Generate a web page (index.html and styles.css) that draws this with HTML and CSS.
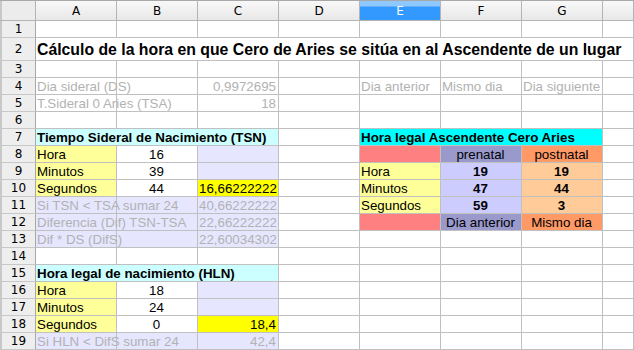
FILE: index.html
```html
<!DOCTYPE html>
<html>
<head>
<meta charset="utf-8">
<link rel="stylesheet" href="styles.css">
</head>
<body>
<table class="sheet">
<colgroup>
<col class="c-rh"><col class="c"><col class="c"><col class="c"><col class="c"><col class="c"><col class="c"><col class="c"><col class="c-last">
</colgroup>
<tr class="hdr">
<th class="corner"></th><th>A</th><th>B</th><th>C</th><th>D</th><th class="sel">E</th><th>F</th><th>G</th><th></th>
</tr>
<tr><th class="rh">1</th><td></td><td></td><td></td><td></td><td></td><td></td><td></td><td></td></tr>
<tr class="tall"><th class="rh">2</th><td colspan="8" class="title">Cálculo de la hora en que Cero de Aries se sitúa en al Ascendente de un lugar</td></tr>
<tr><th class="rh">3</th><td></td><td></td><td></td><td></td><td></td><td></td><td></td><td></td></tr>
<tr><th class="rh">4</th><td class="grey">Dia sideral (DS)</td><td></td><td class="grey r">0,9972695</td><td></td><td class="grey">Dia anterior</td><td class="grey">Mismo dia</td><td class="grey">Dia siguiente</td><td></td></tr>
<tr><th class="rh">5</th><td class="grey">T.Sideral 0 Aries (TSA)</td><td></td><td class="grey r">18</td><td></td><td></td><td></td><td></td><td></td></tr>
<tr><th class="rh">6</th><td></td><td></td><td></td><td></td><td></td><td></td><td></td><td></td></tr>
<tr><th class="rh">7</th><td colspan="3" class="b lcyan">Tiempo Sideral de Nacimiento (TSN)</td><td></td><td colspan="3" class="b cyan">Hora legal Ascendente Cero Aries</td><td></td></tr>
<tr><th class="rh">8</th><td class="lyel">Hora</td><td class="m">16</td><td class="lav"></td><td></td><td class="red"></td><td class="pur m">prenatal</td><td class="ora m">postnatal</td><td></td></tr>
<tr><th class="rh">9</th><td class="lyel">Minutos</td><td class="m">39</td><td class="lav"></td><td></td><td class="lyel">Hora</td><td class="lpur m b">19</td><td class="peach m b">19</td><td></td></tr>
<tr><th class="rh">10</th><td class="lyel">Segundos</td><td class="m">44</td><td class="yel r">16,66222222</td><td></td><td class="lyel">Minutos</td><td class="lpur m b">47</td><td class="peach m b">44</td><td></td></tr>
<tr><th class="rh">11</th><td class="lav grey">Si TSN &lt; TSA sumar 24</td><td class="lav"></td><td class="lav grey r">40,66222222</td><td></td><td class="lyel">Segundos</td><td class="lpur m b">59</td><td class="peach m b">3</td><td></td></tr>
<tr><th class="rh">12</th><td class="lav grey">Diferencia (Dif) TSN-TSA</td><td class="lav"></td><td class="lav grey r">22,66222222</td><td></td><td class="red"></td><td class="pur m">Dia anterior</td><td class="ora m">Mismo dia</td><td></td></tr>
<tr><th class="rh">13</th><td class="lav grey">Dif * DS (DifS)</td><td class="lav"></td><td class="lav grey r">22,60034302</td><td></td><td></td><td></td><td></td><td></td></tr>
<tr><th class="rh">14</th><td></td><td></td><td></td><td></td><td></td><td></td><td></td><td></td></tr>
<tr><th class="rh">15</th><td colspan="3" class="b lcyan">Hora legal de nacimiento (HLN)</td><td></td><td></td><td></td><td></td><td></td></tr>
<tr><th class="rh">16</th><td class="lyel">Hora</td><td class="m">18</td><td class="lav"></td><td></td><td></td><td></td><td></td><td></td></tr>
<tr><th class="rh">17</th><td class="lyel">Minutos</td><td class="m">24</td><td class="lav"></td><td></td><td></td><td></td><td></td><td></td></tr>
<tr><th class="rh">18</th><td class="lyel">Segundos</td><td class="m">0</td><td class="yel r">18,4</td><td></td><td></td><td></td><td></td><td></td></tr>
<tr><th class="rh">19</th><td class="lav grey">Si HLN &lt; DifS sumar 24</td><td class="lav"></td><td class="lav grey r">42,4</td><td></td><td></td><td></td><td></td><td></td></tr>
</table>
</body>
</html>
```
FILE: styles.css
```css
html, body {
  margin: 0;
  padding: 0;
  background: #fff;
  overflow: hidden;
}
.sheet {
  table-layout: fixed;
  border-collapse: separate;
  border-spacing: 0;
  width: 634px;
  font-family: "Liberation Sans", Arial, sans-serif;
  font-size: 13.33px;
  color: #000;
}
.c-rh { width: 36px; }
.c { width: 81px; }
.c-last { width: 31px; }
.sheet td, .sheet th {
  box-sizing: border-box;
  height: 17px;
  padding: 0 2px 0 1px;
  border-right: 1px solid #c0c0c0;
  border-bottom: 1px solid #c0c0c0;
  white-space: nowrap;
  overflow: visible;
  vertical-align: bottom;
  line-height: 15px;
  text-align: left;
  font-weight: normal;
}
.sheet tr.tall td, .sheet tr.tall th { height: 23px; }
.hdr th {
  height: 21px;
  border-top: 1px solid #a8a8a8;
  border-right-color: #b4b4b4;
  border-bottom-color: #b4b4b4;
  background: linear-gradient(#f8f8f8, #e8e8e8);
  font-family: "DejaVu Sans", Tahoma, sans-serif;
  font-size: 12px;
  text-align: center;
  vertical-align: middle;
  line-height: 16px;
  padding: 0;
}
.hdr th.sel {
  background: linear-gradient(#8ec8ff 0, #8ec8ff 5px, #3399ff 6px, #3399ff);
  color: #fff;
}
.hdr th.corner {
  background: linear-gradient(to right, #c8c8c8 0, #c8c8c8 2px, #ececec 2px);
}
.sheet th.rh {
  background: linear-gradient(to right, #c8c8c8 0, #c8c8c8 2px, #eeeeee 2px);
  border-right-color: #a8a8a8;
  border-bottom-color: #c8c8c8;
  font-family: "DejaVu Sans", Tahoma, sans-serif;
  font-size: 12px;
  text-align: center;
  vertical-align: middle;
  line-height: 14px;
  padding: 0 0 0 2px;
}
.sheet .title {
  font-weight: bold;
  font-size: 15.8px;
  line-height: 18px;
  padding-bottom: 1px;
}
.sheet .b { font-weight: bold; }
.sheet .r { text-align: right; }
.sheet .m { text-align: center; }
.grey { color: #b2b2b2; }
.lcyan { background: #ccffff; }
.cyan { background: #00ffff; }
.lyel { background: #ffff99; }
.yel { background: #ffff00; }
.lav { background: #e6e6ff; }
.red { background: #ff8080; }
.pur { background: #9999cc; }
.lpur { background: #ccccff; }
.ora { background: #ff9966; }
.peach { background: #ffcc99; }
```
